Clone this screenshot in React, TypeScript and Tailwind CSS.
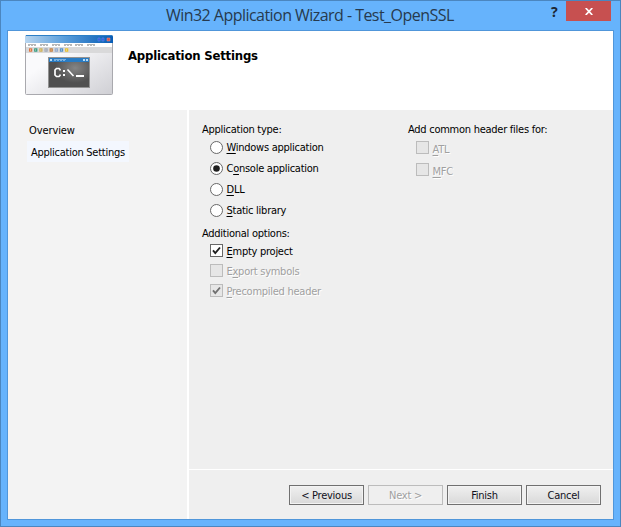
import type { ReactNode } from "react";

const Key = ({ children }: { children: ReactNode }) => (
  <span className="underline decoration-1 underline-offset-[2px]">{children}</span>
);

function Radio({ checked = false, children }: { checked?: boolean; children: ReactNode }) {
  return (
    <div className="flex h-[21px] items-center gap-[3.5px]">
      <svg width="13" height="13" viewBox="0 0 13 13" className="shrink-0">
        <circle cx="6.5" cy="6.5" r="6" fill="#fff" stroke="#686868" />
        {checked && <circle cx="6.5" cy="6.5" r="3.3" fill="#202020" />}
      </svg>
      <span>{children}</span>
    </div>
  );
}

function Check({ checked = false, disabled = false, low = false, children }: { checked?: boolean; disabled?: boolean; low?: boolean; children: ReactNode }) {
  return (
    <div className={`flex h-[20px] items-center gap-[3.5px] ${disabled ? "text-[#a0a0a0] [text-shadow:1px_1px_0_#ffffff]" : ""}`}>
      <svg width="13" height="13" viewBox="0 0 13 13" className="shrink-0">
        <rect x=".5" y=".5" width="12" height="12" fill={disabled ? "#e6e6e6" : "#fff"} stroke={disabled ? "#bcbcbc" : "#686868"} />
        {checked && <path d="M3 6.3 5.3 9 10 3.5" fill="none" stroke={disabled ? "#707070" : "#202020"} strokeWidth="1.9" />}
      </svg>
      <span className={low ? "pt-[5px]" : "pt-[3px]"}>{children}</span>
    </div>
  );
}

function Button({ disabled = false, children }: { disabled?: boolean; children: ReactNode }) {
  return (
    <button
      disabled={disabled}
      className={`flex h-[20px] w-[75px] items-center justify-center border pt-px ${
        disabled
          ? "border-[#bcbcbc] bg-[#efefef] text-[#a0a0a0] [text-shadow:1px_1px_0_#ffffff]"
          : "border-[#707070] bg-linear-to-b from-[#f0f0f0] to-[#d9d9d9] text-[#101020] shadow-[inset_0_0_0_1px_#f3f3f3]"
      }`}
    >
      {children}
    </button>
  );
}

const menuX = [3, 15, 27, 39, 50, 62];
const tools = ["#e0743f", "#2f9a80", "#cfae50", "#9ca5b5", "#c47a38", "#8fa9cf", "#4f90cc", "#e8c02a"];

function WizardIcon() {
  return (
    <svg width="88" height="60" viewBox="0 0 88 60" className="shrink-0">
      <defs>
        <linearGradient id="bar"><stop stopColor="#b8d5ef" /><stop offset=".45" stopColor="#5a9edb" /><stop offset="1" stopColor="#075cb5" /></linearGradient>
        <linearGradient id="body" x1="0" y1="0" x2="1" y2="1"><stop offset=".35" stopColor="#fafafc" /><stop offset="1" stopColor="#cfcfd4" /></linearGradient>
        <radialGradient id="term" cx=".65" cy=".35"><stop stopColor="#858585" /><stop offset="1" stopColor="#505050" /></radialGradient>
      </defs>
      <rect x=".5" y=".5" width="87" height="59" rx="1" fill="url(#body)" stroke="#a9a9ae" />
      <path d="M0 8V2Q0 0 2 0H86Q88 0 88 2V8Z" fill="url(#bar)" />
      <path d="M1 .5H87" stroke="#2c7fc6" />
      <path d="M73 3h2v3h-2zM77 3h2v3h-2z" fill="#2f50e0" stroke="#6b99ea" strokeWidth=".5" />
      <path d="M82 3h3v3h-3z" fill="#d75349" stroke="#e59696" strokeWidth=".5" />
      <rect x="1" y="8" width="86" height="4" fill="#fff" />
      {menuX.map((x) => (
        <path key={x} d={`M${x} 9.5h8M${x} 10.5h2m1 0h2m1 0h2`} stroke="#999" strokeWidth=".7" />
      ))}
      <rect x="1" y="12" width="86" height="6" fill="#d9d9da" />
      {tools.map((color, i) => (
        <g key={color}>
          <rect x={4 + i * 5.15} y="13.3" width="3.2" height="3.4" fill={color} />
          <rect x={5 + i * 5.15} y="14.5" width="1" height="1" fill="#f2e9d5" />
        </g>
      ))}
      <rect x="23.5" y="22.5" width="41" height="30" fill="url(#term)" stroke="#929292" />
      <rect x="24" y="23" width="40" height="4" fill="#287bc3" />
      <path d="M25 25h2m31 0h2m1 0h2" stroke="#b9dcf5" strokeWidth="2" />
      <path d="M29 24.5h12M29 25.5h2m1 0h2m1 0h2m1 0h2" stroke="#9dc9eb" strokeWidth=".7" />
      <path d="M35 35.5V34.5L34 33.5H31.5L30 35V40L31.5 41.5H34L35 40.5V39.5" fill="none" stroke="#fff" strokeWidth="1.7" />
      <path d="M38 35h2v2h-2zM38 39h2v2h-2zM51 40h8v2h-8z" fill="#fff" />
      <path d="m42.5 34.5 6 6.5" stroke="#fff" strokeWidth="1.6" />
    </svg>
  );
}

export default function App() {
  return (
    <div className="flex h-[527px] w-[621px] flex-col border border-[#4b86bf] bg-[#66b3fc] px-[6px] pb-[6px] font-['DejaVu_Sans_Condensed','DejaVu_Sans',sans-serif] text-[11px] leading-[14px] tracking-[-0.26px] whitespace-nowrap text-black [font-stretch:condensed]">
      <div className="flex h-[29px] shrink-0 items-start">
        <h1 className="ml-[159px] w-[288px] pt-[3px] font-['Open_Sans','Noto_Sans',sans-serif] text-[16px] leading-[22px] tracking-[-0.54px] text-[#263a4e] [font-stretch:normal]">Win32 Application Wizard - Test_OpenSSL</h1>
        <span className="ml-[97px] w-[15px] pt-[2px] font-['Noto_Sans',sans-serif] text-[14px] leading-[18px] font-bold text-[#1c2733] [font-stretch:normal]">?</span>
        <div className="flex h-[20px] w-[45px] items-center justify-center bg-[#c75050]">
          <svg width="8" height="7" viewBox="0 0 8 7"><path d="m.7 0 6.6 7M7.3 0 .7 7" stroke="#fff" strokeWidth="1.7" /></svg>
        </div>
      </div>
      <div className="flex min-h-0 grow flex-col border border-[#5096da] bg-white">
        <header className="flex h-[79px] shrink-0 items-start gap-[15px] pt-[4px] pl-[17px]">
          <WizardIcon />
          <h2 className="pt-[12px] text-[13px] leading-[17px] font-bold tracking-[-0.2px]">Application Settings</h2>
        </header>
        <div className="flex grow gap-[2px]">
          <nav className="w-[179px] bg-[#f3f3f3] pt-[14px] pl-[19px]">
            <div className="pl-[2px] tracking-[-0.1px]">Overview</div>
            <div className="mt-[3px] flex h-[21px] w-[102px] items-center bg-[#f3f7fe] pt-[3px] pl-[4px]">Application Settings</div>
          </nav>
          <div className="flex grow flex-col bg-[#efefef]">
            <main className="flex h-[359px] pt-[13px] pl-[13px]">
              <section className="w-[206px]">
                <div>Application type:</div>
                <div className="pl-[8px]">
                  <Radio><Key>W</Key>indows application</Radio>
                  <Radio checked>C<Key>o</Key>nsole application</Radio>
                  <Radio><Key>D</Key>LL</Radio>
                  <Radio><Key>S</Key>tatic library</Radio>
                </div>
                <div className="mt-[6px]">Additional options:</div>
                <div className="-mt-px pl-[8px]">
                  <Check checked><Key>E</Key>mpty project</Check>
                  <Check disabled>E<Key>x</Key>port symbols</Check>
                  <Check checked disabled><Key>P</Key>recompiled header</Check>
                </div>
              </section>
              <section>
                <div>Add common header files for:</div>
                <div className="flex flex-col gap-[2px] pl-[8px]">
                  <Check disabled low><Key>A</Key>TL</Check>
                  <Check disabled low><Key>M</Key>FC</Check>
                </div>
              </section>
            </main>
            <footer className="flex grow justify-end gap-[4px] border-t border-white pt-[15px] pr-[12px]">
              <Button>&lt; Previous</Button>
              <Button disabled>Next &gt;</Button>
              <Button>Finish</Button>
              <Button>Cancel</Button>
            </footer>
          </div>
        </div>
      </div>
    </div>
  );
}
